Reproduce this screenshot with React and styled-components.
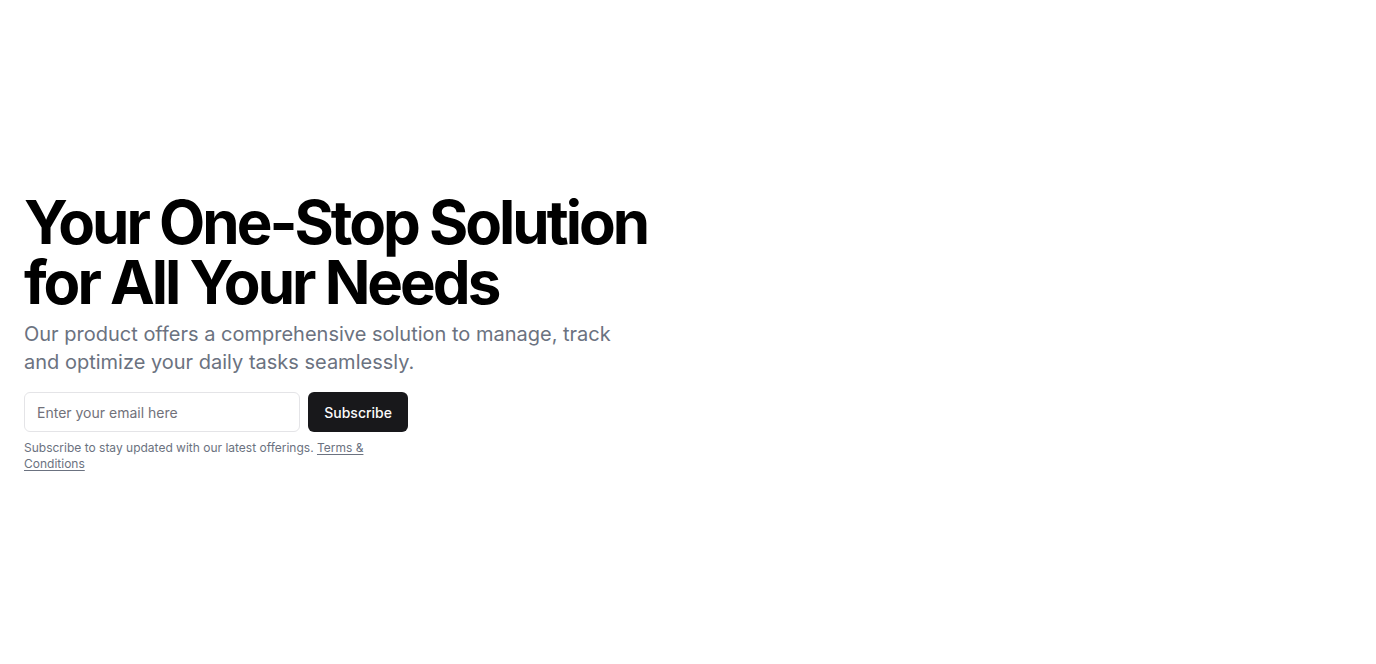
import React from "react";
import styled, { createGlobalStyle } from "styled-components";

const GlobalStyle = createGlobalStyle`
  * { box-sizing: border-box; }
  body {
    margin: 0;
    background: #ffffff;
    font-family: Inter, "Noto Sans", sans-serif;
    color: #09090b;
  }
`;

const Section = styled.section`
  min-height: 100vh;
  display: flex;
  align-items: center;
  padding: 0 24px;
`;

const Content = styled.div`
  display: flex;
  flex-direction: column;
  gap: 16px;
`;

const TextBlock = styled.div`
  display: flex;
  flex-direction: column;
  gap: 8px;
`;

const Heading = styled.h1`
  margin: 0;
  font-size: 60px;
  line-height: 60px;
  font-weight: 700;
  letter-spacing: -0.05em;
  color: #000;
`;

const Lead = styled.p`
  margin: 0;
  max-width: 600px;
  font-size: 20px;
  line-height: 28px;
  color: #6b7280;
`;

const FormBlock = styled.div`
  display: flex;
  flex-direction: column;
  gap: 8px;
  width: 384px;
`;

const Form = styled.form`
  display: flex;
  gap: 8px;
`;

const EmailInput = styled.input`
  flex: 1;
  height: 40px;
  border: 1px solid #e4e4e7;
  border-radius: 6px;
  padding: 0 12px;
  font-family: inherit;
  font-size: 14px;
  color: #09090b;
  background: #fff;
  outline: none;
  &::placeholder { color: #71717a; }
`;

const Button = styled.button`
  height: 40px;
  padding: 0 16px;
  border: none;
  border-radius: 6px;
  background: #18181b;
  color: #fafafa;
  font-family: inherit;
  font-size: 14px;
  font-weight: 500;
  cursor: pointer;
`;

const Note = styled.p`
  margin: 0;
  font-size: 12px;
  line-height: 16px;
  color: #6b7280;
`;

const NoteLink = styled.a`
  color: inherit;
  text-decoration: underline;
  text-underline-offset: 2px;
`;

export default function App() {
  return (
    <>
      <GlobalStyle />
      <Section>
        <Content>
          <TextBlock>
            <Heading>
              Your One-Stop Solution
              <br />
              for All Your Needs
            </Heading>
            <Lead>
              Our product offers a comprehensive solution to manage, track and
              optimize your daily tasks seamlessly.
            </Lead>
          </TextBlock>
          <FormBlock>
            <Form onSubmit={(e) => e.preventDefault()}>
              <EmailInput type="email" placeholder="Enter your email here" />
              <Button type="submit">Subscribe</Button>
            </Form>
            <Note>
              Subscribe to stay updated with our latest offerings.{" "}
              <NoteLink href="#">Terms &amp; Conditions</NoteLink>
            </Note>
          </FormBlock>
        </Content>
      </Section>
    </>
  );
}
